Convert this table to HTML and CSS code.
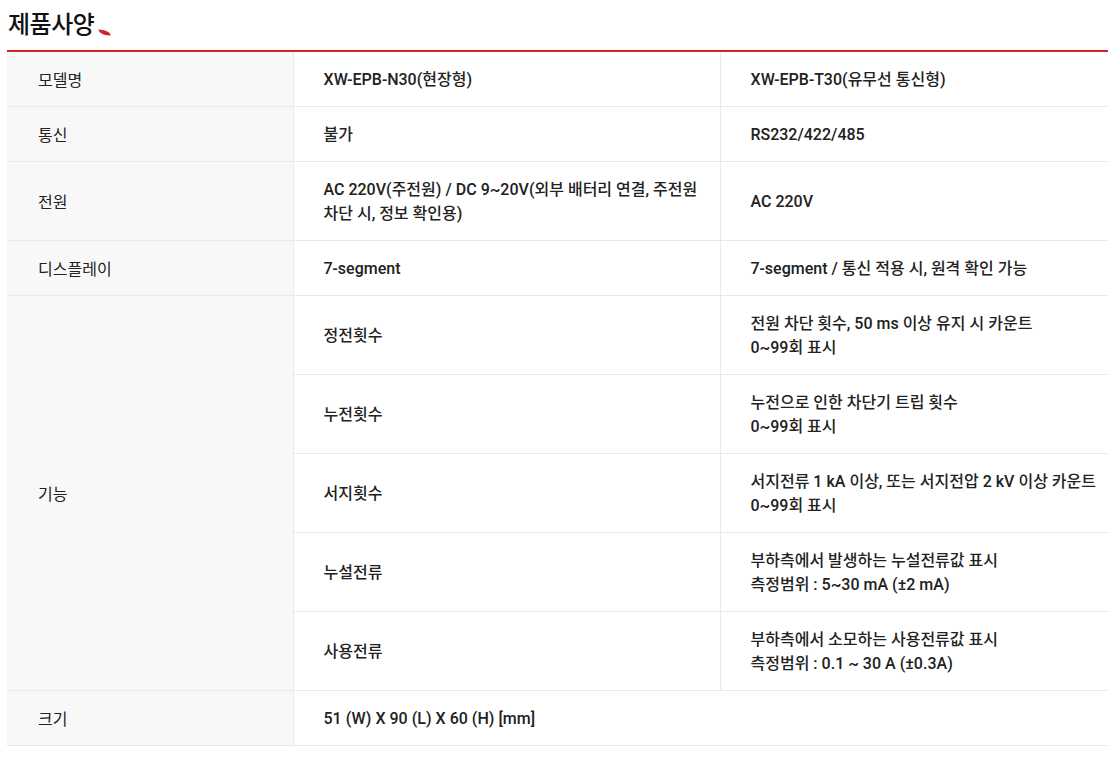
FILE: index.html
```html
<!DOCTYPE html>
<html lang="ko">
<head>
<meta charset="utf-8">
<link rel="stylesheet" href="styles.css">
</head>
<body>
<div class="page">
  <h2 class="title">제품사양<svg class="accent" width="14" height="10" viewBox="0 0 14 10"><path d="M0.5 1.5 C4 1.5 8.5 2.5 11 4.5 C12 5.3 12.5 6.3 12.5 7.5 C9 7.8 5 6.8 2 4.5 C1.2 3.8 0.7 2.8 0.5 1.5 Z" fill="#d2232a"/></svg></h2>
  <table class="spec">
    <colgroup><col class="c1"><col class="c2"><col class="c3"></colgroup>
    <tbody>
      <tr><th>모델명</th><td class="mid">XW-EPB-N30(현장형)</td><td class="end">XW-EPB-T30(유무선 통신형)</td></tr>
      <tr><th>통신</th><td class="mid">불가</td><td class="end">RS232/422/485</td></tr>
      <tr><th>전원</th><td class="mid">AC 220V(주전원) / DC 9~20V(외부 배터리 연결, 주전원 차단 시, 정보 확인용)</td><td class="end">AC 220V</td></tr>
      <tr><th>디스플레이</th><td class="mid">7-segment</td><td class="end">7-segment / 통신 적용 시, 원격 확인 가능</td></tr>
      <tr><th rowspan="5">기능</th><td class="mid">정전횟수</td><td class="end">전원 차단 횟수, 50 ms 이상 유지 시 카운트<br>0~99회 표시</td></tr>
      <tr><td class="mid">누전횟수</td><td class="end">누전으로 인한 차단기 트립 횟수<br>0~99회 표시</td></tr>
      <tr><td class="mid">서지횟수</td><td class="end">서지전류 1 kA 이상, 또는 서지전압 2 kV 이상 카운트<br>0~99회 표시</td></tr>
      <tr><td class="mid">누설전류</td><td class="end">부하측에서 발생하는 누설전류값 표시<br>측정범위 : 5~30 mA (±2 mA)</td></tr>
      <tr><td class="mid">사용전류</td><td class="end">부하측에서 소모하는 사용전류값 표시<br>측정범위 : 0.1 ~ 30 A (±0.3A)</td></tr>
      <tr><th>크기</th><td class="end" colspan="2">51 (W) X 90 (L) X 60 (H) [mm]</td></tr>
    </tbody>
  </table>
</div>
</body>
</html>
```

FILE: styles.css
```css
html, body {
  margin: 0;
  padding: 0;
  background: #fff;
}
body {
  font-family: Roboto, "Noto Sans CJK KR", sans-serif;
  color: #222;
}
.page {
  padding: 9px 1px 0 7px;
}
.title {
  margin: 0 0 0 1px;
  font-size: 24px;
  font-weight: 500;
  line-height: 32px;
  height: 41px;
  color: #111;
  letter-spacing: -0.5px;
}
.accent {
  vertical-align: -5px;
  margin-left: 4px;
}
.spec {
  width: 1101px;
  table-layout: fixed;
  border-collapse: collapse;
  border-top: 2px solid #d2232a;
  font-size: 16px;
  line-height: 24px;
}
.c1 { width: 286px; }
.c2 { width: 427px; }
.c3 { width: 388px; }
.spec th, .spec td {
  padding: 16px 6px 14px 30px;
  border-bottom: 1px solid #e9e9e9;
  border-left: 1px solid #e9e9e9;
  text-align: left;
  vertical-align: middle;
  color: #222;
}
.spec th {
  background: #f8f8f8;
  font-weight: 400;
  border-left: none;
  padding-left: 31px;
  padding-top: 17px;
  padding-bottom: 13px;
}
.spec td {
  font-family: "Roboto Medium", Roboto, "Noto Sans CJK KR", sans-serif;
  font-weight: 500;
}
.spec td.mid {
  padding-right: 22px;
}
.spec td.end {
  padding-right: 4px;
}
```
